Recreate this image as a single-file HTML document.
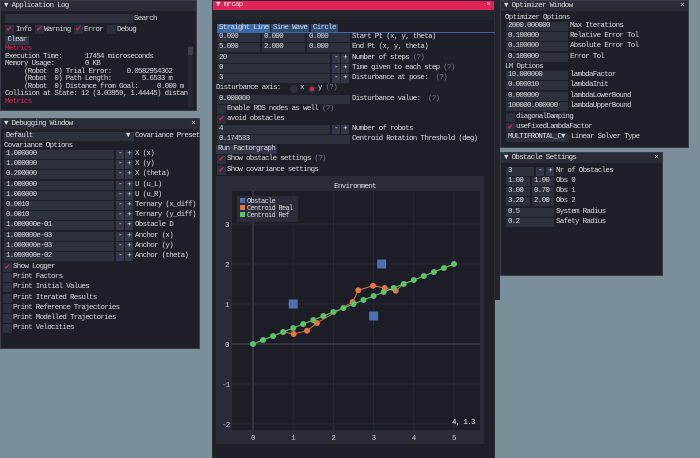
<!DOCTYPE html>
<html><head><meta charset="utf-8"><style>
*{margin:0;padding:0;box-sizing:border-box}
body{width:700px;height:458px;background:#7a8f9a;position:relative;overflow:hidden;font-family:"Liberation Mono",monospace;font-size:7.5px;letter-spacing:-0.7px;color:#d8d8dc;line-height:8px}
.w{position:absolute;background:#1e1f28;border:1px solid #3a3c48}
.tb{position:absolute;left:0;right:0;top:0;height:10px;background:#2a2c38;padding-left:3px;line-height:10px;color:#ddd}
.x{position:absolute;right:4px;top:0}
.t{position:absolute;white-space:pre}
.f{position:absolute;height:9px;background:#2d303d;padding-left:2px;line-height:9px;white-space:pre}
.b{position:absolute;height:9px;width:8px;background:#34374a;text-align:center;line-height:9px}
.c{position:absolute;width:9px;height:9px;background:#2d303d}
.ck{position:absolute;width:9px;height:9px;background:#2d303d;color:#e0245a;font-size:9px;line-height:9px;text-align:center;letter-spacing:0}
.r{color:#e0245a}
</style></head><body>

<!-- Application Log -->
<div class="w" style="left:0;top:0;width:197px;height:111px">
<div class="tb">▼ Application Log</div>
<div class="f" style="left:4px;top:13px;width:128px"></div><div class="t" style="left:133px;top:14px">Search</div>
<div class="ck" style="left:4px;top:24px">✔</div><div class="t" style="left:15px;top:25px">Info</div>
<div class="ck" style="left:34px;top:24px">✔</div><div class="t" style="left:43px;top:25px">Warning</div>
<div class="ck" style="left:73px;top:24px">✔</div><div class="t" style="left:83px;top:25px">Error</div>
<div class="c" style="left:106px;top:24px"></div><div class="t" style="left:116px;top:25px">Debug</div>
<div class="b" style="left:4px;top:35px;width:24px">Clear</div>
<div style="position:absolute;left:187px;top:45px;width:5px;height:62px;background:#262833"><div style="height:8px;background:#3d4050;margin-top:1px"></div></div>
<div class="t r" style="left:4px;top:44px">Metrics</div>
<div class="t" style="left:4px;top:52px">Execution Time:      17454 microseconds</div>
<div class="t" style="left:4px;top:59px">Memory Usage:        0 KB</div>
<div class="t" style="left:4px;top:67px">     (Robot  0) Trial Error:    0.0582954362</div>
<div class="t" style="left:4px;top:74px">     (Robot  0) Path Length:        5.6533 m</div>
<div class="t" style="left:4px;top:82px">     (Robot  0) Distance from Goal:     0.000 m</div>
<div class="t" style="left:4px;top:89px">Collision at State: 12 (3.03959, 1.44445) distan</div>
<div class="t r" style="left:4px;top:97px">Metrics</div>
</div>

<!-- Debugging Window -->
<div class="w" style="left:0;top:118px;width:200px;height:231px">
<div class="tb">▼ Debugging Window<span class="x">×</span></div>
<div class="f" style="left:3px;top:13px;width:130px">Default</div><div class="t" style="left:125px;top:13px">▼</div><div class="t" style="left:134px;top:13px">Covariance Preset</div>
<div class="t" style="left:3px;top:23px">Covariance Options</div>
</div>
<div id="dbg"></div>

<!-- mrcap -->
<div class="w" style="left:212px;top:0;width:283px;height:458px;border-color:#2a2b34">
<div class="tb" style="background:#e0245a;height:9px;line-height:9px">▼ mrcap<span class="x">×</span></div>
<div style="position:absolute;left:0;right:0;top:9px;height:10px;background:#23252f"></div>
<div class="t" style="left:4px;top:23px;background:#3b69a6;padding:0 2px;height:9px;line-height:9px">Straight Line</div>
<div class="t" style="left:58px;top:23px;background:#2d4b72;padding:0 2px;height:9px;line-height:9px">Sine Wave</div>
<div class="t" style="left:98px;top:23px;background:#2d4b72;padding:0 2px;height:9px;line-height:9px">Circle</div>
<div style="position:absolute;left:4px;top:31px;width:278px;height:1px;background:#3b69a6"></div>
</div>
<div style="position:absolute;left:495px;top:0;width:5px;height:300px;background:#23242c"></div>
<div id="mr"></div>

<!-- Optimizer -->
<div class="w" style="left:500px;top:0;width:189px;height:148px">
<div class="tb">▼ Optimizer Window<span class="x">×</span></div>
<div class="t" style="left:4px;top:13px">Optimizer Options</div>
<div class="t" style="left:4px;top:62px">LM Options</div>
<div class="c" style="left:5px;top:112px"></div><div class="t" style="left:15px;top:112px">diagonalDamping</div>
<div class="ck" style="left:5px;top:122px">✔</div><div class="t" style="left:15px;top:122px">useFixedLambdaFactor</div>
<div class="f" style="left:5px;top:132px;width:63px">MULTIFRONTAL_C</div><div class="t" style="left:60px;top:132px;background:#34374a">▼</div><div class="t" style="left:70px;top:132px">Linear Solver Type</div>
</div>

<!-- Obstacle Settings -->
<div class="w" style="left:500px;top:152px;width:163px;height:124px">
<div class="tb">▼ Obstacle Settings<span class="x">×</span></div>
<div class="f" style="left:5px;top:14px;width:28px">3</div><div class="b" style="left:35px;top:14px">-</div><div class="b" style="left:45px;top:14px">+</div><div class="t" style="left:55px;top:14px">Nr of Obstacles</div>
<div class="f" style="left:5px;top:24px;width:24px">1.00</div><div class="f" style="left:31px;top:24px;width:22px">1.00</div><div class="t" style="left:55px;top:24px">Obs 0</div>
<div class="f" style="left:5px;top:34px;width:24px">3.00</div><div class="f" style="left:31px;top:34px;width:22px">0.70</div><div class="t" style="left:55px;top:34px">Obs 1</div>
<div class="f" style="left:5px;top:44px;width:24px">3.20</div><div class="f" style="left:31px;top:44px;width:22px">2.00</div><div class="t" style="left:55px;top:44px">Obs 2</div>
<div class="f" style="left:5px;top:55px;width:48px">0.5</div><div class="t" style="left:55px;top:55px">System Radius</div>
<div class="f" style="left:5px;top:65px;width:48px">0.2</div><div class="t" style="left:55px;top:65px">Safety Radius</div>
</div>

<script>
function add(h){document.body.insertAdjacentHTML('beforeend',h)}
// debug rows
var dv=[["1.000000","X (x)"],["1.000000","X (y)"],["0.200000","X (theta)"],["1.000000","U (u_L)"],["1.000000","U (u_R)"],["0.0010","Ternary (x_diff)"],["0.0010","Ternary (y_diff)"],["1.000000e-01","Obstacle D"],["1.000000e-03","Anchor (x)"],["1.000000e-03","Anchor (y)"],["1.000000e-02","Anchor (theta)"]];
dv.forEach(function(r,i){var y=150+i*10.2;add('<div class="f" style="left:4px;top:'+y+'px;width:110px">'+r[0]+'</div><div class="b" style="left:116px;top:'+y+'px">-</div><div class="b" style="left:125px;top:'+y+'px">+</div><div class="t" style="left:135px;top:'+y+'px">'+r[1]+'</div>')});
var cl=["Show Logger","Print Factors","Print Initial Values","Print Iterated Results","Print Reference Trajectories","Print Modelled Trajectories","Print Velocities"];
cl.forEach(function(s,i){var y=263+i*10.2;add((i==0?'<div class="ck" style="left:3px;top:'+y+'px">✔</div>':'<div class="c" style="left:3px;top:'+y+'px"></div>')+'<div class="t" style="left:13px;top:'+y+'px">'+s+'</div>')});
// mrcap rows
function tri(y,a,b,c,l){add('<div class="f" style="left:217px;top:'+y+'px;width:43px">'+a+'</div><div class="f" style="left:262px;top:'+y+'px;width:43px">'+b+'</div><div class="f" style="left:307px;top:'+y+'px;width:43px">'+c+'</div><div class="t" style="left:352px;top:'+y+'px">'+l+'</div>')}
function pm(y,v,l){add('<div class="f" style="left:217px;top:'+y+'px;width:113px">'+v+'</div><div class="b" style="left:332px;top:'+y+'px">-</div><div class="b" style="left:341px;top:'+y+'px">+</div><div class="t" style="left:352px;top:'+y+'px">'+l+'</div>')}
function fl(y,v,l){add('<div class="f" style="left:217px;top:'+y+'px;width:133px">'+v+'</div><div class="t" style="left:352px;top:'+y+'px">'+l+'</div>')}
function ch(y,on,l){add('<div class="'+(on?'ck':'c')+'" style="left:217px;top:'+y+'px">'+(on?'✔':'')+'</div><div class="t" style="left:227px;top:'+y+'px">'+l+'</div>')}
var g='<span style="color:#777a88">(?)</span>';
tri(33,"0.000","0.000","0.000","Start Pt (x, y, theta)");
tri(43,"5.000","2.000","0.000","End Pt (x, y, theta)");
pm(54,"20","Number of steps "+g);
pm(64,"0","Time given to each step "+g);
pm(74,"3","Disturbance at pose:  "+g);
add('<div class="t" style="left:216px;top:84px">Disturbance axis:</div><div style="position:absolute;left:290px;top:85px;width:8px;height:8px;border-radius:50%;background:#2d303d"></div><div class="t" style="left:300px;top:84px">x</div><div style="position:absolute;left:308px;top:85px;width:8px;height:8px;border-radius:50%;background:#2d303d;border:2px solid #2d303d"><div style="width:4px;height:4px;border-radius:50%;background:#e0245a"></div></div><div class="t" style="left:318px;top:84px">y '+g+'</div>');
fl(95,"0.000000","Disturbance value:  "+g);
ch(105,0,"Enable ROS nodes as well "+g);
ch(115,1,"avoid obstacles");
pm(125,"4","Number of robots");
fl(135,"0.174533","Centroid Rotation Threshold (deg)");
add('<div class="b" style="left:216px;top:145px;width:61px">Run Factorgraph</div>');
ch(155,1,"Show obstacle settings "+g);
ch(166,1,"Show covariance settings");
// optimizer rows
var ov=[[22,"2000.000000","Max Iterations"],[32,"0.100000","Relative Error Tol"],[42,"0.100000","Absolute Error Tol"],[53,"0.100000","Error Tol"],[71,"10.000000","lambdaFactor"],[81,"0.000010","lambdaInit"],[92,"0.000000","lambdaLowerBound"],[102,"100000.000000","lambdaUpperBound"]];
ov.forEach(function(r){add('<div class="f" style="left:506px;top:'+r[0]+'px;width:62px">'+r[1]+'</div><div class="t" style="left:570px;top:'+r[0]+'px">'+r[2]+'</div>')});
// plot
function X(x){return 253+40.2*x}function Y(y){return 344-40*y}
var s='<svg style="position:absolute;left:0;top:0" width="700" height="458">';
s+='<rect x="216" y="176" width="268" height="269" fill="#2a2c3a"/><rect x="232" y="191" width="248" height="239" fill="#1c1d26"/>';
s+='<rect x="216" y="444" width="278" height="14" fill="#1e1f28"/>';
for(var i=0;i<=5;i++){s+='<line x1="'+X(i)+'" y1="191" x2="'+X(i)+'" y2="430" stroke="'+(i==0?'#4a4c58':'#272935')+'"/>';s+='<text x="'+(X(i)-2)+'" y="440" fill="#ccc" font-size="7.5" font-family="Liberation Mono">'+i+'</text>'}
for(var j=-2;j<=3;j++){s+='<line x1="232" y1="'+Y(j)+'" x2="480" y2="'+Y(j)+'" stroke="'+(j==0?'#4a4c58':'#272935')+'"/>';s+='<text x="'+(j<0?222:225)+'" y="'+(Y(j)+3)+'" fill="#ccc" font-size="7.5" font-family="Liberation Mono" letter-spacing="-0.7">'+j+'</text>'}
s+='<text x="355" y="188" fill="#ddd" font-size="7.5" text-anchor="middle" font-family="Liberation Mono" letter-spacing="-0.7">Environment</text>';
var gp=[];for(var k=0;k<=20;k++){gp.push([X(k*.25),Y(k*.1)])}
var op=[gp[0],gp[1],gp[2],gp[3],[293.7,334],[307,330.7],[317,323],[352.7,302],[358.3,290.3],[373,285.7],[384.7,288],[395.7,290.7],gp[15],gp[16],gp[17],gp[18],gp[19],gp[20]];
s+='<polyline fill="none" stroke="#e2744a" points="'+op.map(function(p){return p.join(',')}).join(' ')+'"/>';
op.slice(4,12).forEach(function(p){s+='<circle cx="'+p[0]+'" cy="'+p[1]+'" r="3" fill="#e2744a"/>'});
s+='<polyline fill="none" stroke="#5cc466" points="'+gp.map(function(p){return p.join(',')}).join(' ')+'"/>';
gp.forEach(function(p){s+='<circle cx="'+p[0]+'" cy="'+p[1]+'" r="3" fill="#5cc466"/>'});
[[1,1],[3.2,2],[3,.7]].forEach(function(o){s+='<rect x="'+(X(o[0])-4.5)+'" y="'+(Y(o[1])-4.5)+'" width="9" height="9" fill="#4c72b0"/>'});
s+='<rect x="237" y="196" width="61" height="26" fill="#2a2c3a"/>';
[["#4c72b0","Obstacle"],["#e2744a","Centroid Real"],["#5cc466","Centroid Ref"]].forEach(function(l,i){var y=198+i*7;s+='<rect x="240" y="'+y+'" width="5" height="5" fill="'+l[0]+'"/><text x="247" y="'+(y+5)+'" fill="#ddd" font-size="7" font-family="Liberation Mono" letter-spacing="-0.7">'+l[1]+'</text>'});
s+='<text x="452" y="424" fill="#fff" font-size="7.5" font-family="Liberation Mono" letter-spacing="-0.7">4, 1.3</text>';
s+='</svg>';add(s);
</script>
</body></html>
